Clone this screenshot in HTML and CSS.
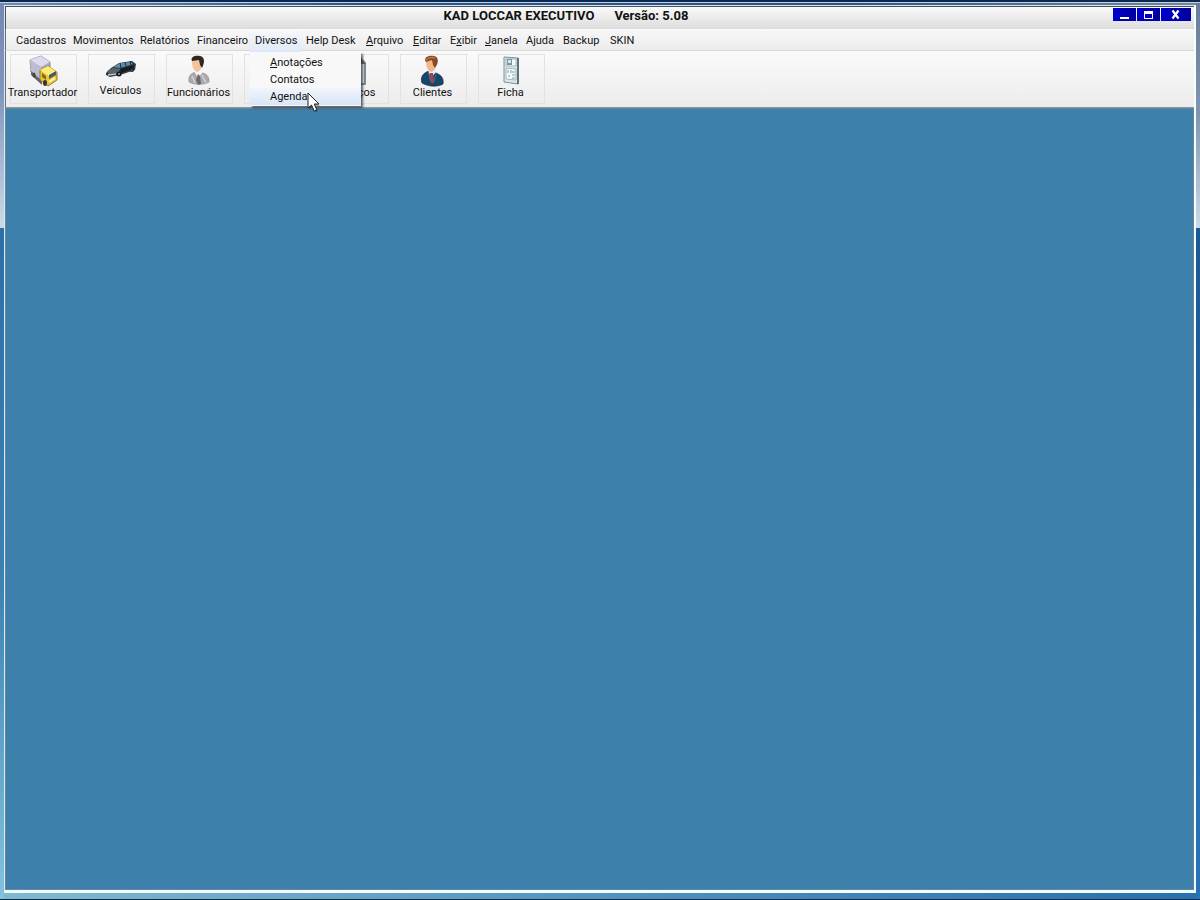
FILE: index.html
```
<!DOCTYPE html>
<html lang="pt-BR">
<head>
    <meta charset="UTF-8">
    <meta name="viewport" content="width=device-width, initial-scale=1.0">
    <title>KAD LOCCAR EXECUTIVO</title>
    <link rel="stylesheet" href="styles.css">
</head>
<body>
    <div class="window">
        <header class="title-bar">
            <h1 class="title"><span>KAD LOCCAR EXECUTIVO</span><span>Versão: 5.08</span></h1>
            <div class="window-buttons">
                <button type="button" aria-label="Minimizar">
                    <svg width="12" height="11" viewBox="0 0 12 11"><path d="M1 8h9v2H1z" fill="#fff"/></svg>
                </button>
                <button type="button" aria-label="Maximizar">
                    <svg width="12" height="11" viewBox="0 0 12 11"><path d="M1 2h9v8H1zM2 5v4h7V5z" fill="#fff" fill-rule="evenodd"/></svg>
                </button>
                <button type="button" class="close" aria-label="Fechar">
                    <svg width="12" height="11" viewBox="0 0 12 11"><path d="M2.500 1.500l6 8M8.500 1.500l-6 8" stroke="#fff" stroke-width="2.200"/></svg>
                </button>
            </div>
        </header>

        <nav class="menu-bar">
            <button type="button">Cadastros</button>
            <button type="button">Movimentos</button>
            <button type="button">Relatórios</button>
            <button type="button">Financeiro</button>
            <div class="menu-open">
                <button type="button" class="active">Diversos</button>
                <div class="dropdown">
                    <button type="button"><u>A</u>notações</button>
                    <button type="button">Contatos</button>
                    <button type="button" class="selected">Agenda</button>
                    <svg class="cursor" width="15" height="21" viewBox="0 0 15 21"><path d="M2 3v15l3.500-3 2.500 5.500 3-1.500-2.500-5H13z" fill="#000" opacity=".3"/><path d="M1 1v15l3.500-3 2.700 6 2.600-1.300L7.200 12H12z" fill="#fff" stroke="#222" stroke-width="1"/></svg>
                </div>
            </div>
            <button type="button">Help Desk</button>
            <button type="button"><u>A</u>rquivo</button>
            <button type="button"><u>E</u>ditar</button>
            <button type="button">E<u>x</u>ibir</button>
            <button type="button"><u>J</u>anela</button>
            <button type="button">Ajuda</button>
            <button type="button">Backup</button>
            <button type="button">SKIN</button>
        </nav>

        <div class="toolbar">
            <button type="button">
                <svg width="32" height="32" viewBox="0 0 32 32">
                    <path d="M3 5L14 1l9 6v9l-9 9L4 17z" fill="#aaa9c4" stroke="#77768e" stroke-width=".8"/>
                    <path d="M3 5l11-4 9 6-9 5z" fill="#dcdcec"/>
                    <path d="M3 5l11 7v13L4 17z" fill="#bdbcd3"/>
                    <path d="M4 16l11 10v4L4 20z" fill="#65636b"/>
                    <path d="M13 15l8-4 9 6v8l-9 6-8-6z" fill="#eec52e" stroke="#7c681e" stroke-width=".8"/>
                    <path d="M13 15l8-4 9 6-8 4z" fill="#ffeb76"/>
                    <path d="M22 20l7-4v4l-7 4z" fill="#48596c"/>
                    <path d="M15 18l4 3v4l-4-3z" fill="#786a31"/>
                    <path d="M22 27l6-4" stroke="#fff5bd" stroke-width="2"/>
                    <ellipse cx="18" cy="28" rx="2" ry="3" fill="#343434"/>
                    <ellipse cx="7" cy="20" rx="1.500" ry="2.500" fill="#444"/>
                </svg>
                <span>Transportador</span>
            </button>
            <button type="button">
                <svg width="32" height="30" viewBox="0 0 32 30">
                    <path d="M1 18l5-5 8-5 13-2 4 3-1 6-15 5-10 2-4-2z" fill="#303940"/>
                    <path d="M8 12l7-4 11-1 2 2-13 4z" fill="#568eaa"/>
                    <path d="M2 16l6-3 8 1-4 4-8 1z" fill="#59636c"/>
                    <path d="M15 14l14-4-1 4-12 4z" fill="#171c22"/>
                    <path d="M15 8l1 5M20 7l1 4M25 6l1 4" stroke="#202a31"/>
                    <path d="M3 20l8-1" stroke="#bfc8ce" stroke-width="1.500"/>
                    <circle cx="14" cy="19" r="2.500" fill="#15171a"/>
                    <circle cx="14" cy="19" r="1" fill="#9ba2a7"/>
                    <circle cx="27" cy="15" r="2" fill="#15171a"/>
                    <circle cx="27" cy="15" r=".8" fill="#8c959d"/>
                </svg>
                <span>Veículos</span>
            </button>
            <button type="button">
                <svg width="32" height="32" viewBox="0 0 32 32">
                    <path d="M6 27c-1-6 2-9 7-10l7 1c5 2 6 4 6 9-5 3-15 3-20 0z" fill="#a9a9ae" stroke="#828287" stroke-width=".6"/>
                    <path d="M11 16l4 7 5-6-1-3h-6z" fill="#f7f4f2"/>
                    <path d="M15 19l2 2 1 8-3 1-2-5z" fill="#69696f"/>
                    <path d="M19 20l4 8M9 21l3 7" stroke="#d2d2ce" stroke-width="1.500"/>
                    <path d="M9 6c0-4 10-5 10 1 0 5-1 9-5 10-4-2-5-6-5-11z" fill="#f4c39c"/>
                    <path d="M9 6c-2-4 3-6 8-5 5 1 5 6 2 12l-2-3-1-5z" fill="#302622"/>
                </svg>
                <span>Funcionários</span>
            </button>
            <button type="button" aria-label="Locações">
                <svg width="32" height="32" viewBox="0 0 32 32"><path d="M7 2h16v28H7z" fill="#edf2f5" stroke="#9099a0"/></svg>
            </button>
            <button type="button">
                <svg width="32" height="32" viewBox="0 0 32 32"><path d="M3 2h17l6 6v21H3z" fill="#e1e4e8" stroke="#858a91" stroke-width="2"/><path d="M20 1v8h7z" fill="#606870"/></svg>
                <span>Serviços</span>
            </button>
            <button type="button">
                <svg width="32" height="32" viewBox="0 0 32 32">
                    <path d="M5 28c-2-6 1-10 7-12l7 2c5 2 8 5 7 11-5 3-14 3-21-1z" fill="#17466b" stroke="#102b43" stroke-width=".7"/>
                    <path d="M11 15l3 8 5-6v-4h-7z" fill="#e8eff5"/>
                    <path d="M13 18h3l1 9-2 2-3-6z" fill="#a83e53"/>
                    <path d="M11 17l3 10M19 18l-2 9" stroke="#347096"/>
                    <path d="M9 7c0-5 10-6 10 0 0 5-1 9-5 10-4-2-5-6-5-10z" fill="#f0b98b"/>
                    <path d="M9 7c-3-4 2-7 8-6 5 1 5 7 1 12l-2-3-1-5z" fill="#884b27"/>
                    <path d="M9 5c3-3 6-3 9-2" stroke="#bd7840" stroke-width="1.500" fill="none"/>
                </svg>
                <span>Clientes</span>
            </button>
            <button type="button">
                <svg width="32" height="32" viewBox="0 0 32 32">
                    <path d="M9 2l14 1v26l-14-2z" fill="#dae7ea" stroke="#7f9095"/>
                    <path d="M23 3v26" stroke="#435962" stroke-width="1.500"/>
                    <path d="M11 4h10v7H11zM11 13l10 1v11l-10-1z" fill="#f4fbfb" stroke="#a2b6bc"/>
                    <path d="M12 4h5v6h-5z" fill="#78939d"/>
                    <path d="M13 5h3v3h-3z" fill="#d5e8ed"/>
                    <path d="M13 15v3M16 15v3M13 21h2M17 17h3M17 20h3M17 23h3" stroke="#7f9ba4"/>
                </svg>
                <span>Ficha</span>
            </button>
        </div>

        <main class="workspace"></main>
    </div>
</body>
</html>
```
FILE: styles.css
```
* {
    margin: 0;
    padding: 0;
    box-sizing: border-box;
}

body {
    min-height: 100vh;
    display: flex;
    padding: 2px 4px 0;
    font-family: Roboto, "Liberation Sans", sans-serif;
    font-size: 11px;
    line-height: 16px;
    color: #111;
    background:
        linear-gradient(#0d2a4d, #0d2a4d) top / 100% 2px no-repeat,
        linear-gradient(#bfd0e0, #bfd0e0) 0 2px / 100% 1px no-repeat,
        linear-gradient(#0b2b49, #0b2b49) bottom / 100% 1px no-repeat,
        linear-gradient(#7487b5, #8095bd 40%, #cadbea) left top / 4px 228px no-repeat,
        linear-gradient(#687b9b, #8095b0 50%, #cadbea) right top / 4px 228px no-repeat,
        linear-gradient(#23639f, #3a83b5 65%, #82c4df) left top / 4px 100% no-repeat,
        linear-gradient(#17508a, #2873b8) right top / 4px 100% no-repeat,
        linear-gradient(90deg, #7289b5, #28558d 30%, #28558d 70%, #7487a0) top / 100% 8px no-repeat,
        linear-gradient(90deg, #82b9d1, #4a8bb8 60%, #286fae) bottom / 100% 12px no-repeat;
}

button {
    border: 0;
    background: none;
    font: inherit;
    color: inherit;
}

.window {
    flex: 1;
    display: flex;
    flex-direction: column;
    margin: 3px 0 7px;
    border: 1px solid #dce9f3;
    border-right: 2px solid #f4ffff;
    border-bottom: 3px solid #efffff;
}

.title-bar {
    display: grid;
    grid-template-columns: 1fr auto 1fr;
    height: 23px;
    border-top: 1px solid #45525e;
    border-left: 1px solid #45525e;
    background: linear-gradient(#fafafa, #dcdcdc);
}

.title {
    grid-column: 2;
    display: flex;
    gap: 20px;
    padding-right: 68px;
    font-size: 13px;
    line-height: 17px;
    font-weight: 700;
}

.window-buttons {
    justify-self: end;
    display: flex;
    gap: 1px;
    height: 13px;
    margin: 1px 3px;
}

.window-buttons button {
    width: 23px;
    display: flex;
    align-items: center;
    justify-content: center;
    background: linear-gradient(90deg, #0000d0, #00009d);
}

.window-buttons .close {
    width: 30px;
}

.menu-bar {
    display: grid;
    grid-template-columns: 57px 67px 57px 58px 51px 60px 47px 37px 35px 41px 37px 47px 40px;
    height: 22px;
    padding: 1px 5px;
    border-left: 1px solid #687078;
    border-bottom: 1px solid #d9d9d9;
    background: linear-gradient(#f8f8f8, #ececec);
}

.menu-bar button {
    padding: 0 5px;
    line-height: 20px;
    text-align: left;
    white-space: nowrap;
}

.menu-open {
    position: relative;
}

.menu-bar .active {
    width: 100%;
    line-height: 22px;
    background: linear-gradient(#f6f8fb, #dfe9f7);
}

.dropdown {
    position: absolute;
    top: 22px;
    left: 0;
    z-index: 1;
    width: 111px;
    padding: 2px 0 1px;
    display: flex;
    flex-direction: column;
    background: #f8f8f8;
    box-shadow: 2px 2px 2px rgba(30, 40, 50, .7);
}

.dropdown button {
    padding: 0 20px;
    line-height: 17px;
}

.dropdown .selected {
    background: linear-gradient(#f1f5fb, #d7e5f7);
}

.cursor {
    position: absolute;
    left: 57px;
    top: 40px;
}

.toolbar {
    display: flex;
    gap: 11px;
    height: 57px;
    padding: 3px 4px;
    border-left: 1px solid #687078;
    border-bottom: 1px solid #8b969e;
    background: linear-gradient(#fafafa, #ececec);
}

.toolbar button {
    width: 67px;
    height: 50px;
    padding-right: 2px;
    display: flex;
    flex-direction: column;
    align-items: center;
    border: 1px solid #e2e2e2;
    line-height: 12px;
}

.workspace {
    flex: 1;
    border: 1px solid #68859a;
    background: #3d80ac;
}
```
